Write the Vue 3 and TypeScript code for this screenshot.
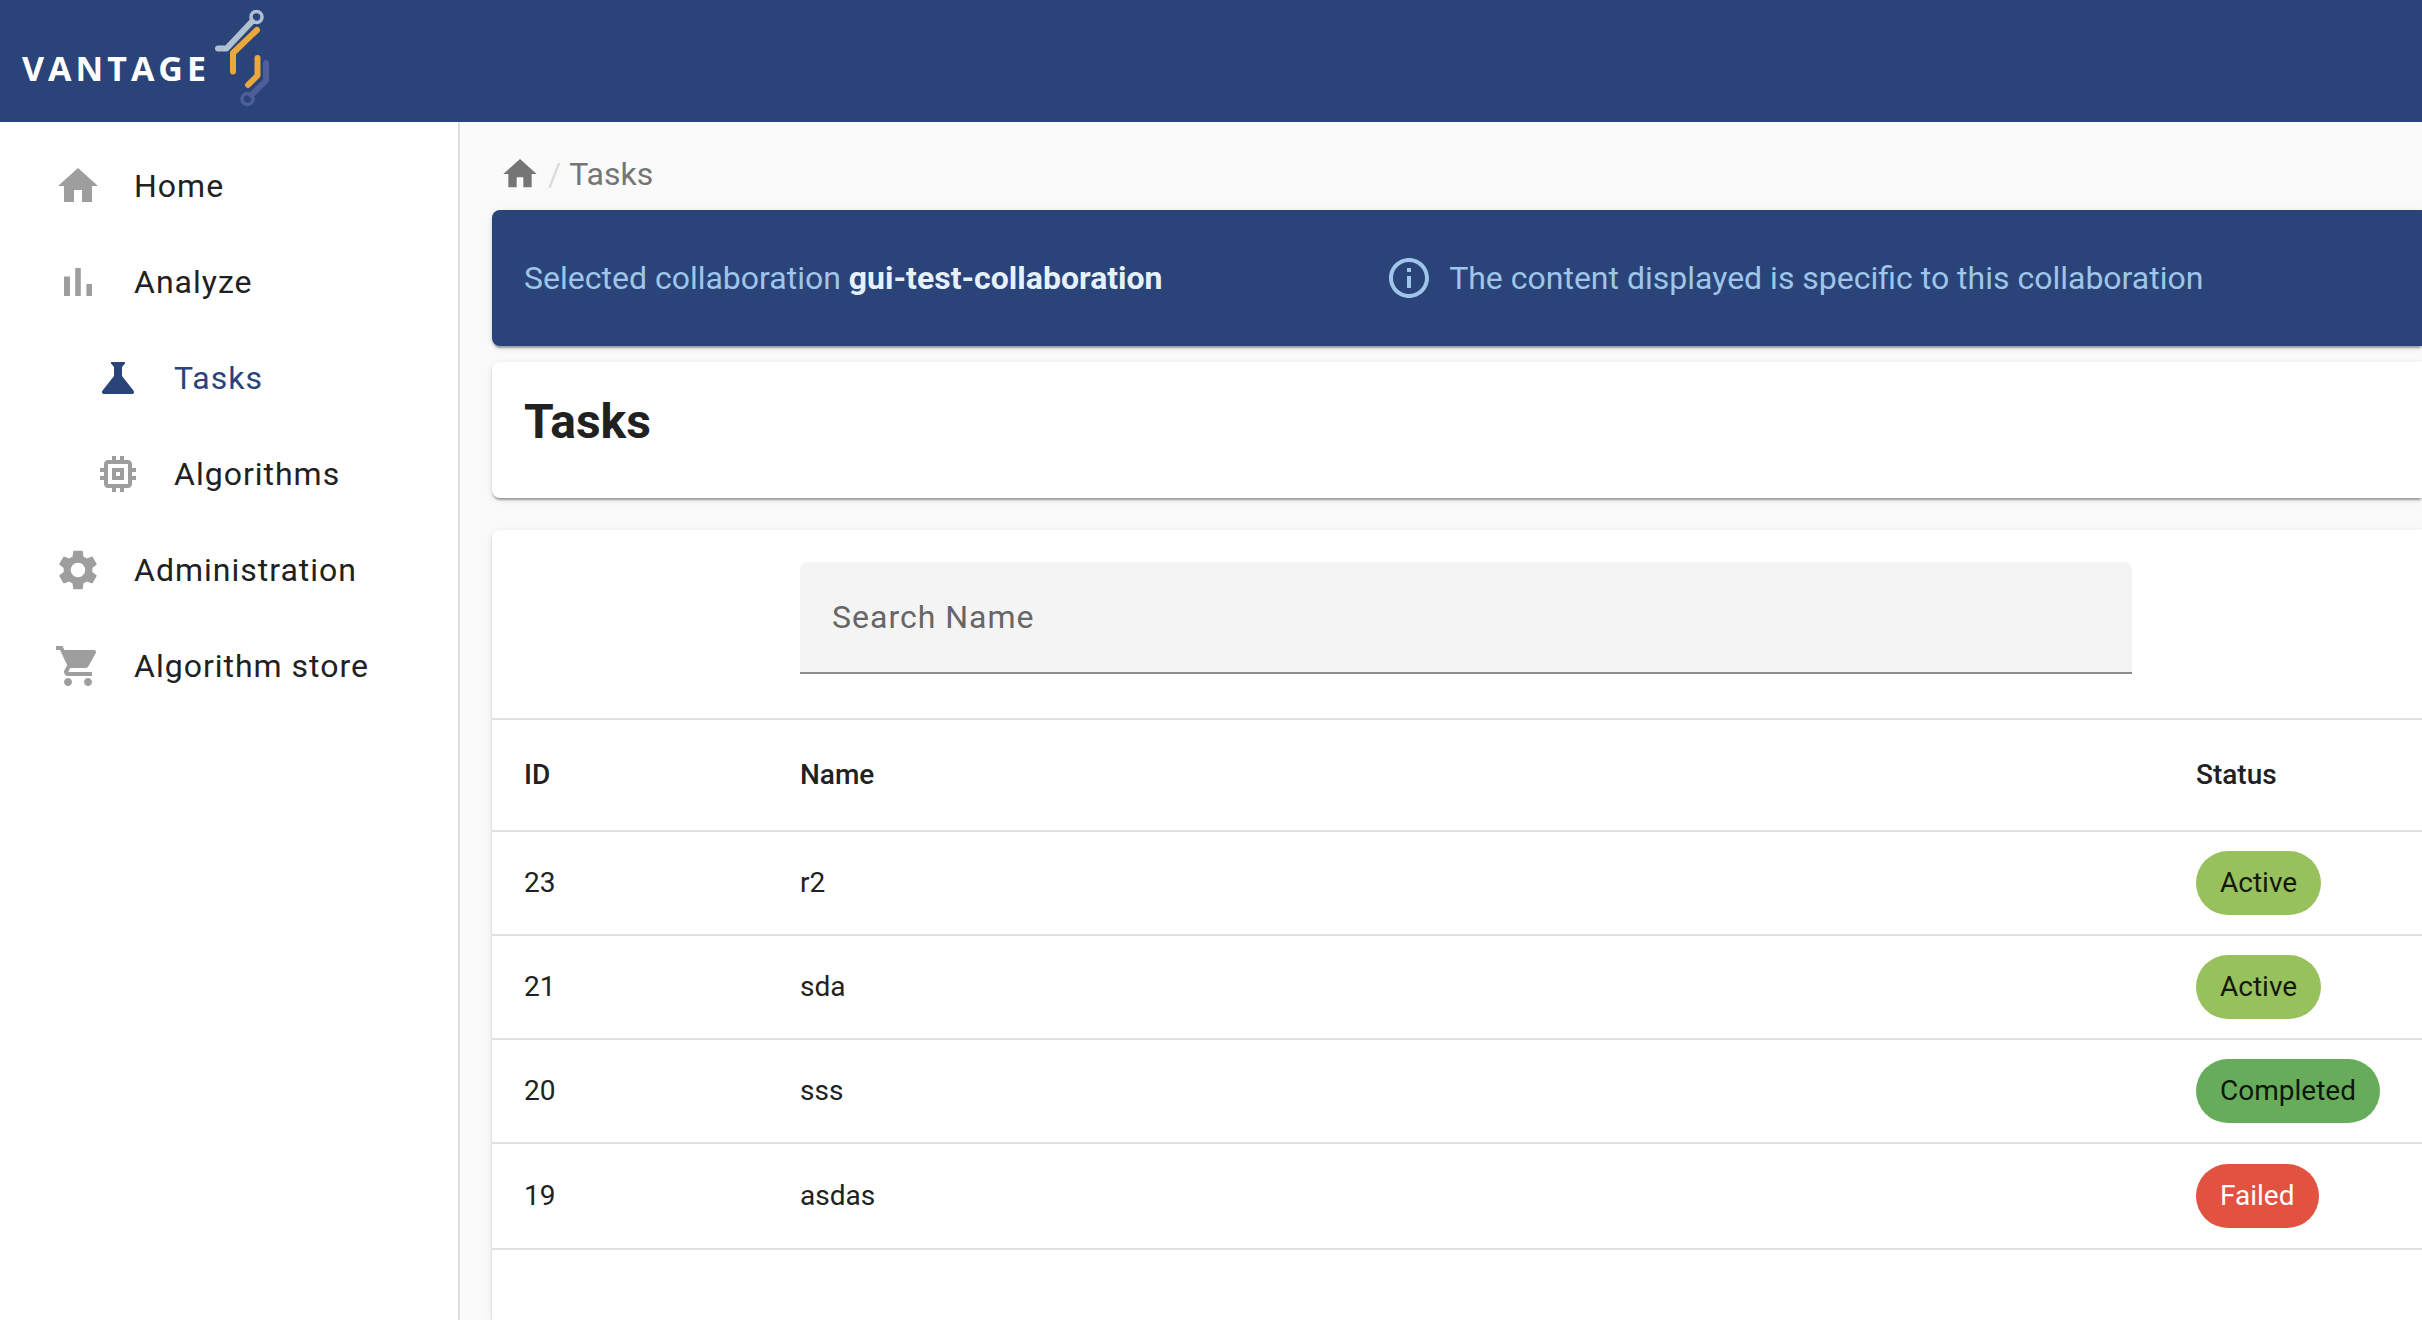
<script setup lang="ts">
import { ref, computed } from 'vue'

interface NavItem {
  label: string
  icon: string
  child?: boolean
  active?: boolean
}

interface Task {
  id: number
  name: string
  status: 'Active' | 'Completed' | 'Failed'
}

const icons: Record<string, string> = {
  home: 'M10 20v-6h4v6h5v-8h3L12 3 2 12h3v8z',
  analyze: 'M5 9.2h3V19H5zM10.6 5h2.8v14h-2.8zm5.6 8H19v6h-2.8z',
  flask:
    'M8.5 4h7v.8L14 6.5V11l5.8 7.4c.5.8.1 1.6-.8 1.6H5c-.9 0-1.3-.8-.8-1.6L10 11V6.5L8.5 4.8z',
  memory:
    'M15 9H9v6h6V9zm-2 4h-2v-2h2v2zm8-2V9h-2V7c0-1.1-.9-2-2-2h-2V3h-2v2h-2V3H9v2H7c-1.1 0-2 .9-2 2v2H3v2h2v2H3v2h2v2c0 1.1.9 2 2 2h2v2h2v-2h2v2h2v-2h2c1.1 0 2-.9 2-2v-2h2v-2h-2v-2h2zm-4 6H7V7h10v10z',
  settings:
    'M19.14 12.94c.04-.3.06-.61.06-.94 0-.32-.02-.64-.07-.94l2.03-1.58c.18-.14.23-.41.12-.61l-1.92-3.32c-.12-.22-.37-.29-.59-.22l-2.39.96c-.5-.38-1.03-.7-1.62-.94l-.36-2.54c-.04-.24-.24-.41-.48-.41h-3.84c-.24 0-.43.17-.47.41l-.36 2.54c-.59.24-1.13.57-1.62.94l-2.39-.96c-.22-.08-.47 0-.59.22L2.74 8.87c-.12.21-.08.47.12.61l2.03 1.58c-.05.3-.09.63-.09.94s.02.64.07.94l-2.03 1.58c-.18.14-.23.41-.12.61l1.92 3.32c.12.22.37.29.59.22l2.39-.96c.5.38 1.03.7 1.62.94l.36 2.54c.05.24.24.41.48.41h3.84c.24 0 .44-.17.47-.41l.36-2.54c.59-.24 1.13-.56 1.62-.94l2.39.96c.22.08.47 0 .59-.22l1.92-3.32c.12-.22.07-.47-.12-.61l-2.01-1.58zM12 15.6c-1.98 0-3.6-1.62-3.6-3.6s1.62-3.6 3.6-3.6 3.6 1.62 3.6 3.6-1.62 3.6-3.6 3.6z',
  cart: 'M7 18c-1.1 0-1.99.9-1.99 2S5.9 22 7 22s2-.9 2-2-.9-2-2-2zM1 2v2h2l3.6 7.59-1.35 2.45c-.16.28-.25.61-.25.96 0 1.1.9 2 2 2h12v-2H7.42c-.14 0-.25-.11-.25-.25l.03-.12.9-1.63h7.45c.75 0 1.41-.41 1.75-1.03l3.58-6.49c.08-.14.12-.31.12-.48 0-.55-.45-1-1-1H5.21l-.94-2H1zm16 16c-1.1 0-1.99.9-1.99 2s.89 2 1.99 2 2-.9 2-2-.9-2-2-2z',
  info: 'M11 7h2v2h-2zm0 4h2v6h-2zm1-9C6.48 2 2 6.48 2 12s4.48 10 10 10 10-4.48 10-10S17.52 2 12 2zm0 18c-4.41 0-8-3.59-8-8s3.59-8 8-8 8 3.59 8 8-3.59 8-8 8z',
}

const navItems: NavItem[] = [
  { label: 'Home', icon: 'home' },
  { label: 'Analyze', icon: 'analyze' },
  { label: 'Tasks', icon: 'flask', child: true, active: true },
  { label: 'Algorithms', icon: 'memory', child: true },
  { label: 'Administration', icon: 'settings' },
  { label: 'Algorithm store', icon: 'cart' },
]

const tasks: Task[] = [
  { id: 23, name: 'r2', status: 'Active' },
  { id: 21, name: 'sda', status: 'Active' },
  { id: 20, name: 'sss', status: 'Completed' },
  { id: 19, name: 'asdas', status: 'Failed' },
]

const search = ref('')
const visibleTasks = computed(() =>
  tasks.filter((t) => t.name.toLowerCase().includes(search.value.toLowerCase())),
)
</script>

<template>
  <div class="app">
    <header class="topbar">
      <a class="brand" href="#" aria-label="Vantage">
        <span class="wordmark">VANTAGE</span>
        <svg class="brand-mark" viewBox="212 8 60 100" fill="none" stroke-linecap="round" stroke-linejoin="round" aria-hidden="true">
          <g stroke="#afc1d1">
            <path d="M218 48.5H226.5L252 21.5" stroke-width="6" />
            <circle cx="256.5" cy="17" r="5.5" stroke-width="3.5" />
          </g>
          <g stroke="#4f5d99">
            <path d="M266 63V80.5L251.500 95" stroke-width="6" />
            <circle cx="247.5" cy="99" r="5.5" stroke-width="3.5" />
          </g>
          <g stroke="#eba83a" stroke-width="6">
            <path d="M257 30L233 53V71.5" />
            <path d="M257.500 58V75.5L248 85" />
          </g>
        </svg>
      </a>
    </header>

    <div class="body">
      <nav class="sidebar" aria-label="Main">
        <a
          v-for="item in navItems"
          :key="item.label"
          href="#"
          class="nav-item"
          :class="{ child: item.child, active: item.active }"
        >
          <svg class="icon" viewBox="0 0 24 24" aria-hidden="true"><path :d="icons[item.icon]" /></svg>
          <span>{{ item.label }}</span>
        </a>
      </nav>

      <main class="content">
        <nav class="breadcrumbs" aria-label="Breadcrumb">
          <a href="#" aria-label="Home">
            <svg class="crumb-icon" viewBox="0 0 24 24" aria-hidden="true"><path :d="icons.home" /></svg>
          </a>
          <span class="slash">/</span>
          <span>Tasks</span>
        </nav>

        <section class="card banner">
          <p>Selected collaboration <strong>gui-test-collaboration</strong></p>
          <p class="notice">
            <svg class="icon" viewBox="0 0 24 24" aria-hidden="true"><path :d="icons.info" /></svg>
            <span>The content displayed is specific to this collaboration</span>
          </p>
        </section>

        <section class="card title-card">
          <h1>Tasks</h1>
        </section>

        <section class="card table-card">
          <table>
            <colgroup>
              <col class="col-id" />
              <col />
              <col class="col-status" />
            </colgroup>
            <thead>
              <tr class="filters">
                <td></td>
                <td>
                  <input v-model="search" type="text" placeholder="Search Name" aria-label="Search Name" />
                </td>
                <td></td>
              </tr>
              <tr class="headings">
                <th scope="col">ID</th>
                <th scope="col">Name</th>
                <th scope="col">Status</th>
              </tr>
            </thead>
            <tbody>
              <tr v-for="task in visibleTasks" :key="task.id">
                <td>{{ task.id }}</td>
                <td>{{ task.name }}</td>
                <td>
                  <span class="chip" :class="task.status.toLowerCase()">{{ task.status }}</span>
                </td>
              </tr>
            </tbody>
          </table>
        </section>
      </main>
    </div>
  </div>
</template>

<style>
body {
  margin: 0;
  background: #fafafa;
}
</style>

<style scoped>
.app {
  display: flex;
  flex-direction: column;
  min-height: 100vh;
  font-family: Roboto, 'Liberation Sans', sans-serif;
  font-size: 32px;
  line-height: 48px;
  color: #212121;
  background: #fafafa;
}

.topbar {
  display: flex;
  height: 122px;
  background: #2a4379;
}

.brand {
  display: flex;
  align-items: flex-start;
  gap: 4px;
  padding: 8px 0 0 22px;
  color: #fff;
  text-decoration: none;
}

.wordmark {
  width: 186px;
  margin-top: 36px;
  font-family: 'Open Sans', 'Noto Sans', sans-serif;
  font-size: 34px;
  font-weight: 700;
  letter-spacing: 4px;
}

.brand-mark {
  width: 60px;
  height: 100px;
}

.body {
  display: flex;
  flex: 1;
}

.sidebar {
  flex: none;
  box-sizing: border-box;
  width: 460px;
  padding-top: 16px;
  letter-spacing: 1px;
  background: #fff;
  border-right: 2px solid #e0e0e0;
}

.nav-item {
  display: flex;
  align-items: center;
  gap: 32px;
  height: 96px;
  padding-left: 54px;
  color: #212121;
  text-decoration: none;
}

.nav-item.child {
  padding-left: 94px;
}

.icon {
  flex: none;
  width: 48px;
  height: 48px;
  fill: #9e9e9e;
}

.nav-item.active {
  color: #2a4379;
}

.nav-item.active .icon {
  fill: #2a4379;
}

.content {
  display: flex;
  flex: 1;
  flex-direction: column;
  min-width: 0;
  padding-left: 32px;
}

.breadcrumbs {
  display: flex;
  align-items: center;
  box-sizing: border-box;
  height: 88px;
  padding: 16px 0 0 8px;
  color: #757575;
}

.crumb-icon {
  display: block;
  width: 40px;
  height: 40px;
  fill: #757575;
}

.slash {
  padding: 0 8px;
  color: #dcdcdc;
}

.card {
  background: #fff;
  border-radius: 8px 0 0 8px;
  box-shadow:
    0 4px 2px -2px rgba(0, 0, 0, 0.2),
    0 2px 2px rgba(0, 0, 0, 0.14),
    0 2px 6px rgba(0, 0, 0, 0.12);
}

.banner {
  display: grid;
  grid-template-columns: 49fr 59fr;
  align-items: center;
  height: 136px;
  padding-left: 32px;
  color: #9fc5e8;
  background: #2a4379;
}

.banner p {
  margin: 0;
}

.banner strong {
  color: #e6f1fa;
}

.banner .notice {
  display: flex;
  align-items: center;
  gap: 16px;
}

.banner .icon {
  fill: #9fc5e8;
}

.title-card {
  margin-top: 16px;
  padding: 32px 32px 48px;
}

h1 {
  margin: 0;
  font-size: 48px;
  line-height: 56px;
  font-weight: 700;
}

.table-card {
  flex: 1;
  margin-top: 32px;
  border-bottom-left-radius: 0;
}

table {
  width: 100%;
  table-layout: fixed;
  border-spacing: 0;
  font-size: 28px;
  line-height: 40px;
}

.col-id {
  width: 276px;
}

.col-status {
  width: 258px;
}

th,
td {
  box-sizing: border-box;
  height: 104px;
  padding: 0 32px;
  text-align: left;
  border-bottom: 2px solid #e0e0e0;
}

th {
  height: 112px;
  font-weight: 500;
}

.filters td {
  padding-top: 32px;
  padding-bottom: 44px;
}

tbody tr:last-child td {
  height: 106px;
}

input {
  display: block;
  box-sizing: border-box;
  width: 100%;
  height: 112px;
  padding: 0 32px;
  font: inherit;
  font-size: 32px;
  letter-spacing: 1px;
  color: #212121;
  background: #f4f4f4;
  border: 0;
  border-bottom: 2px solid #8c8c8c;
  border-radius: 8px 8px 0 0;
  outline: none;
}

input::placeholder {
  color: #666;
  opacity: 1;
}

.chip {
  display: inline-block;
  padding: 12px 24px;
  vertical-align: middle;
  border-radius: 32px;
}

.chip.active {
  color: #14190c;
  background: #97c15c;
}

.chip.completed {
  color: #0e170c;
  background: #67ac5b;
}

.chip.failed {
  color: #fff;
  background: #e15241;
}
</style>
